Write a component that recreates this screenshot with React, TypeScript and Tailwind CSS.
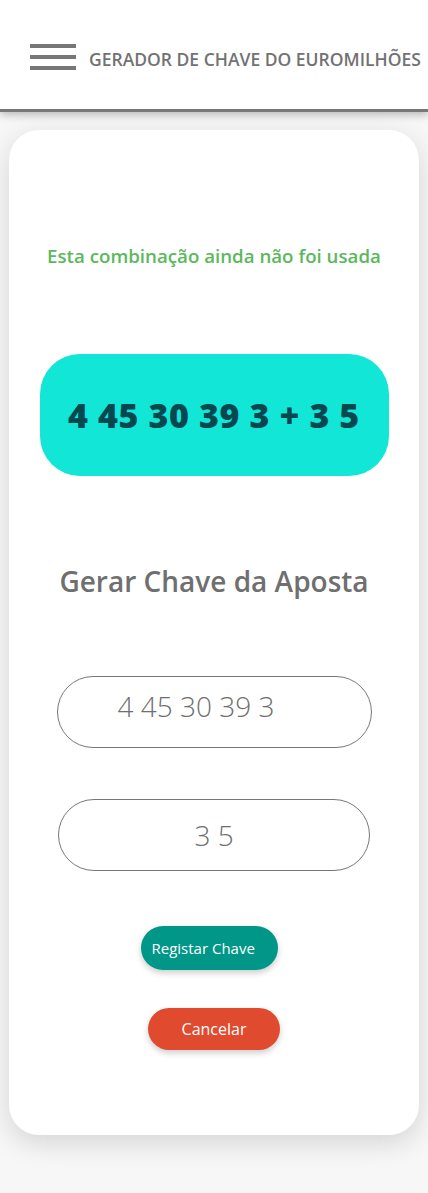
const font = { fontFamily: '"Open Sans", "Noto Sans", sans-serif' }

export default function App() {
  return (
    <div className="min-h-[1193px] bg-[#f7f7f7]" style={font}>
      <header className="h-[112px] bg-white border-b-[3px] border-[#777] shadow-[0_3px_8px_rgba(0,0,0,0.25)] flex items-center pl-[30px] pt-[5px]">
        <div className="flex flex-col gap-[7px] w-[46px]">
          <span className="h-[4px] bg-[#777]" />
          <span className="h-[4px] bg-[#777]" />
          <span className="h-[4px] bg-[#777]" />
        </div>
        <h1 className="ml-[13px] mt-[4px] text-[17.5px] text-[#727272] font-semibold whitespace-nowrap">
          GERADOR DE CHAVE DO EUROMILHÕES
        </h1>
      </header>

      <main className="px-[9px] pt-[18px]">
        <div className="bg-white rounded-[30px] shadow-[0_8px_28px_rgba(0,0,0,0.14)] h-[1005px] flex flex-col items-center">
          <p className="mt-[112px] text-[18.7px] font-semibold text-[#5cb85c]">
            Esta combinação ainda não foi usada
          </p>

          <div className="mt-[84px] w-[349px] h-[122px] rounded-[40px] bg-[#12e6d7] flex items-center justify-center">
            <span className="text-[34px] font-extrabold text-[#07474f] tracking-[0.6px]">
              4 45 30 39 3 + 3 5
            </span>
          </div>

          <h2 className="mt-[84px] text-[28px] font-semibold text-[#6f6f6f]">
            Gerar Chave da Aposta
          </h2>

          <div className="mt-[74px] w-[315px] h-[72px] rounded-full border border-[#777] flex items-start pl-[60px] pt-[8px]">
            <span className="text-[28px] font-light text-[#6f6f6f]">4 45 30 39 3</span>
          </div>

          <div className="mt-[51px] w-[312px] h-[72px] rounded-full border border-[#777] flex items-center justify-center">
            <span className="text-[28px] font-light text-[#6f6f6f]">3 5</span>
          </div>

          <button className="mt-[55px] ml-[-10px] h-[44px] w-[137px] rounded-full bg-[#009688] text-white text-[15px] text-left pl-[11px] shadow-[0_3px_6px_rgba(0,0,0,0.2)]">
            Registar Chave
          </button>

          <button className="mt-[38px] h-[42px] w-[132px] rounded-full bg-[#e04a2f] text-white text-[16px] shadow-[0_3px_6px_rgba(0,0,0,0.2)]">
            Cancelar
          </button>
        </div>
      </main>
    </div>
  )
}
